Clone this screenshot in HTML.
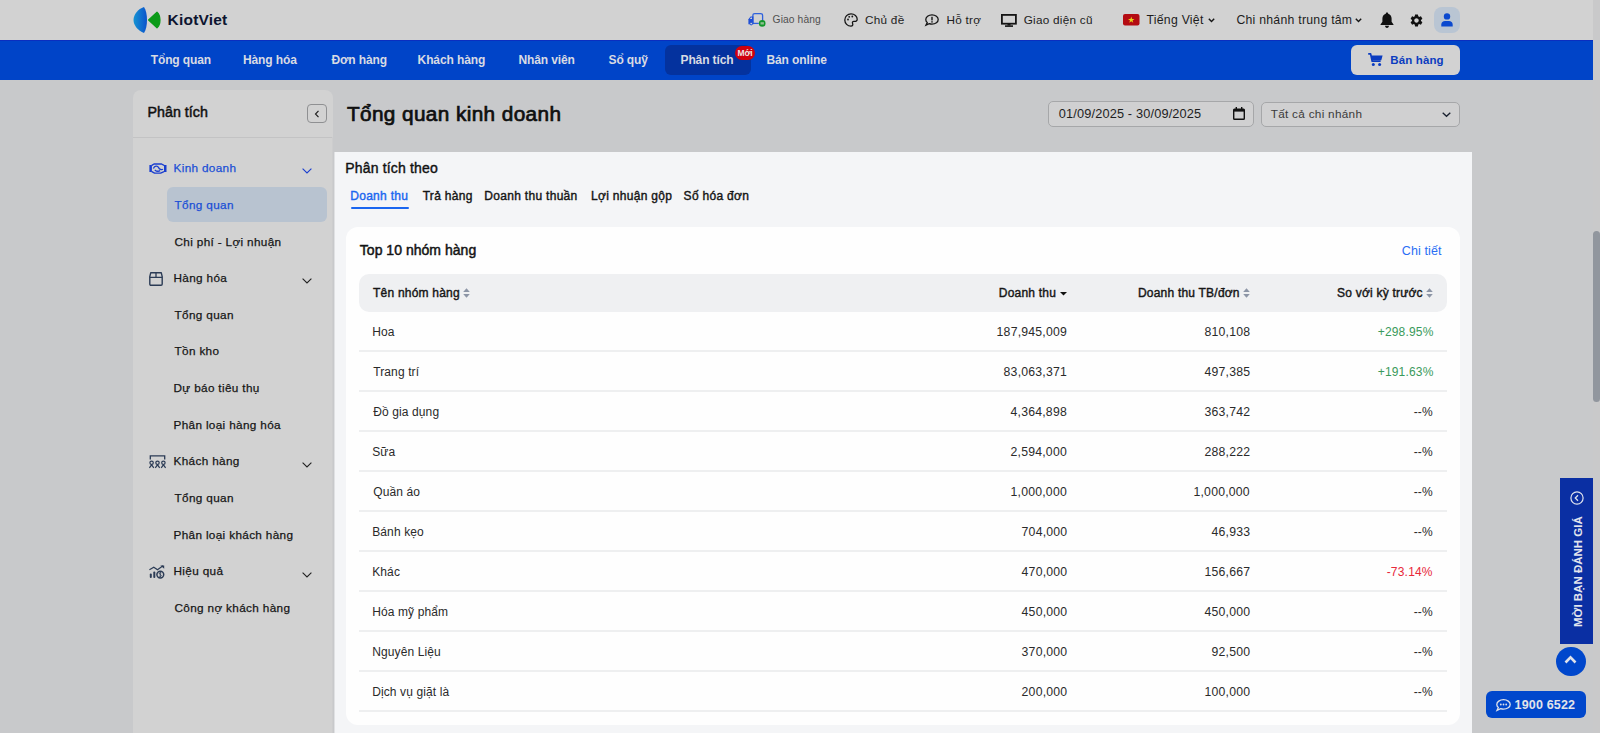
<!DOCTYPE html>
<html><head><meta charset="utf-8">
<style>
*{margin:0;padding:0;box-sizing:border-box}
html,body{width:1600px;height:733px;overflow:hidden}
body{background:#c8c9cb;font-family:"Liberation Sans",sans-serif;position:relative;color:#111}
.a{position:absolute}
.t{position:absolute;white-space:nowrap;line-height:20px;font-family:"Liberation Sans",sans-serif}
svg{position:absolute;overflow:visible}
</style></head><body>
<!-- bars -->
<div class="a" style="left:0;top:0;width:1593px;height:40px;background:#d2d2d2"></div>
<div class="a" style="left:0;top:40px;width:1593px;height:40px;background:#0044c8"></div>
<div class="a" style="left:1593px;top:0;width:7px;height:733px;background:#c9c9ca"></div>
<div class="a" style="left:1593px;top:231px;width:7px;height:171px;background:#91969e;border-radius:3.5px"></div>

<!-- logo -->
<svg style="left:133px;top:6px" width="28" height="28" viewBox="0 0 28 28">
 <defs><linearGradient id="lg" x1="0" y1="0" x2="1" y2="0"><stop offset="0" stop-color="#1593d2"/><stop offset="1" stop-color="#0a52cc"/></linearGradient></defs>
 <path d="M11 1 C5 3 0.5 8.5 0.5 14 C0.5 19.5 5 24.5 11 27 C13 24 14 19 14 14 C14 9 13 4 11 1Z" fill="url(#lg)"/>
 <path d="M15.6 14 L24 6.2 C26 8 27 11 27 14 C27 17 26 20 24 21.8 Z" fill="#0b9a18" stroke="#0b9a18" stroke-width="1.2" stroke-linejoin="round"/>
</svg>

<!-- top icons -->
<svg style="left:748px;top:13px" width="18" height="14" viewBox="0 0 18 14">
 <path d="M4.9 10.4 L4.9 2.4 Q4.9 0.6 6.9 0.6 L12.6 0.6 Q14.6 0.6 14.6 2.4 L14.6 8" fill="none" stroke="#2f62dc" stroke-width="1.3"/>
 <path d="M4.9 10.4 L10.8 10.4" stroke="#2f62dc" stroke-width="1.3"/>
 <path d="M0.4 11.2 L0.4 6.2 L2.6 3.4 L5.4 3.4 L5.4 11.2 Z" fill="#1f4fd6"/>
 <path d="M1.9 6 L2.9 4.6 L4 4.6 L4 6 Z" fill="#d2d2d2"/>
 <circle cx="3.2" cy="10.6" r="1.3" fill="#d2d2d2" stroke="#1f4fd6" stroke-width="1"/>
 <circle cx="14.2" cy="10.4" r="3.3" fill="#12962a"/>
 <rect x="12.5" y="9.2" width="3.4" height="2.3" fill="#8fbf92"/>
</svg>
<svg style="left:844px;top:13px" width="14" height="14" viewBox="0 0 14 14">
 <path d="M7 0.8 C10.6 0.8 13.2 3.3 13.2 6.2 C13.2 8.3 11.5 8.6 10.2 8.4 C8.8 8.2 8 9.3 8.6 10.6 C9.2 12 8.5 13.2 7 13.2 C3.5 13.2 0.8 10.4 0.8 7 C0.8 3.6 3.5 0.8 7 0.8Z" fill="none" stroke="#151515" stroke-width="1.3"/>
 <circle cx="4" cy="6.5" r="0.9" fill="#151515"/><circle cx="5.2" cy="3.8" r="0.9" fill="#151515"/><circle cx="8.3" cy="3.5" r="0.9" fill="#151515"/>
</svg>
<svg style="left:925px;top:14px" width="14" height="12" viewBox="0 0 14 12">
 <path d="M7 0.8 C10.5 0.8 13.2 2.9 13.2 5.5 C13.2 8.1 10.5 10.1 7 10.1 C6 10.1 5 9.9 4.2 9.6 L1 11.2 L2.2 8.6 C1.3 7.8 0.8 6.7 0.8 5.5 C0.8 2.9 3.5 0.8 7 0.8Z" fill="none" stroke="#151515" stroke-width="1.3"/>
 <rect x="6.3" y="2.8" width="1.4" height="3.6" fill="#151515"/><rect x="6.3" y="7.2" width="1.4" height="1.4" fill="#151515"/>
</svg>
<svg style="left:1001px;top:13.5px" width="16" height="13" viewBox="0 0 16 13">
 <rect x="0.9" y="0.9" width="14" height="8.8" fill="none" stroke="#151515" stroke-width="1.8"/>
 <rect x="6.5" y="9.5" width="3" height="2" fill="#151515"/><rect x="4" y="11.3" width="8" height="1.6" fill="#151515"/>
</svg>
<svg style="left:1122.5px;top:14px" width="17" height="12" viewBox="0 0 17 12">
 <rect x="0" y="0" width="16.5" height="11.4" rx="2" fill="#b40b12"/>
 <path d="M8.25 2.6 L9.05 4.95 L11.5 4.95 L9.5 6.4 L10.25 8.8 L8.25 7.3 L6.25 8.8 L7 6.4 L5 4.95 L7.45 4.95Z" fill="#e6d21a"/>
</svg>
<svg style="left:1207.5px;top:17.5px" width="7" height="5" viewBox="0 0 7 5"><path d="M0.8 0.8 L3.5 3.6 L6.2 0.8" fill="none" stroke="#151515" stroke-width="1.4"/></svg>
<svg style="left:1354.5px;top:18px" width="7" height="5" viewBox="0 0 7 5"><path d="M0.8 0.8 L3.5 3.6 L6.2 0.8" fill="none" stroke="#151515" stroke-width="1.4"/></svg>
<svg style="left:1380px;top:11.8px" width="14" height="16" viewBox="0 0 14 16">
 <path d="M7 0.5 C7.8 0.5 8.2 1 8.2 1.7 C10.4 2.3 11.6 4.3 11.6 6.6 L11.6 9.8 L13.5 12.4 L13.5 13 L0.5 13 L0.5 12.4 L2.4 9.8 L2.4 6.6 C2.4 4.3 3.6 2.3 5.8 1.7 C5.8 1 6.2 0.5 7 0.5Z" fill="#111"/>
 <path d="M5 13.8 L9 13.8 C9 15 8.1 16 7 16 C5.9 16 5 15 5 13.8Z" fill="#111"/>
</svg>
<svg style="left:1410.4px;top:13.6px" width="13" height="13" viewBox="0 0 24 24">
 <path d="M19.14 12.94c.04-.3.06-.61.06-.94 0-.32-.02-.64-.07-.94l2.03-1.58a.49.49 0 0 0 .12-.61l-1.92-3.32a.488.488 0 0 0-.59-.22l-2.39.96c-.5-.38-1.03-.7-1.62-.94l-.36-2.54a.484.484 0 0 0-.48-.41h-3.84c-.24 0-.43.17-.47.41l-.36 2.54c-.59.24-1.13.57-1.62.94l-2.39-.96c-.22-.08-.47 0-.59.22L2.74 8.87c-.12.21-.08.47.12.61l2.03 1.58c-.05.3-.09.63-.09.94s.02.64.07.94l-2.03 1.58a.49.49 0 0 0-.12.61l1.92 3.32c.12.22.37.29.59.22l2.39-.96c.5.38 1.03.7 1.62.94l.36 2.54c.05.24.24.41.48.41h3.84c.24 0 .44-.17.47-.41l.36-2.54c.59-.24 1.13-.56 1.62-.94l2.39.96c.22.08.47 0 .59-.22l1.92-3.32c.12-.22.07-.47-.12-.61l-2.01-1.58zM12 15.6c-1.98 0-3.6-1.62-3.6-3.6s1.62-3.6 3.6-3.6 3.6 1.62 3.6 3.6-1.62 3.6-3.6 3.6z" fill="#111" transform="translate(12 12) scale(1.15) translate(-12 -12)"/>
</svg>
<div class="a" style="left:1434px;top:7px;width:26px;height:26px;background:#b9c5d3;border-radius:8px"></div>
<svg style="left:1441px;top:13px" width="12" height="14" viewBox="0 0 12 14">
 <circle cx="6" cy="3.4" r="3.2" fill="#0b49cf"/>
 <path d="M0.3 13.4 L0.3 11.6 C0.3 9.3 2 8 4 8 L8 8 C10 8 11.7 9.3 11.7 11.6 L11.7 13.4 Z" fill="#0b49cf"/>
</svg>

<!-- nav extras -->
<div class="a" style="left:0;top:40px;width:1593px;height:1px;background:#0a2ec0"></div>
<div class="a" style="left:665.4px;top:45px;width:85.6px;height:30px;background:#04329e;border-radius:6px"></div>
<div class="a" style="left:735px;top:46.3px;width:20px;height:13.5px;background:#d0000e;border-radius:7px"></div>
<div class="t" style="left:737.6px;top:43px;font-size:8.5px;font-weight:bold;color:#ece4e4;letter-spacing:-0.2px">Mới</div>
<div class="a" style="left:1351px;top:45px;width:109px;height:30px;background:#d2d2d2;border-radius:6px"></div>
<svg style="left:1367.8px;top:53.3px" width="15" height="13" viewBox="0 0 15 13">
 <path d="M0.2 0.9 L2.6 0.9 L4.2 8.2 L12.6 8.2" fill="none" stroke="#0b3cc0" stroke-width="1.7" stroke-linejoin="round"/>
 <path d="M3.2 2.6 L14.6 2.6 L13.3 7.2 L4.2 7.2 Z" fill="#0b3cc0"/>
 <circle cx="5.3" cy="11.4" r="1.5" fill="#0b3cc0"/><circle cx="11.6" cy="11.4" r="1.5" fill="#0b3cc0"/>
</svg>

<!-- sidebar -->
<div class="a" style="left:133px;top:90px;width:200px;height:660px;background:#d2d2d2;border-radius:8px 8px 0 0"></div>
<div class="a" style="left:133px;top:136.5px;width:200px;height:1px;background:#c3c3c4"></div>
<div class="a" style="left:306.8px;top:103.5px;width:20px;height:19.5px;border:1px solid #8f9092;border-radius:4px"></div>
<svg style="left:313.5px;top:109.5px" width="6" height="8" viewBox="0 0 6 8"><path d="M4.5 0.8 L1.5 4 L4.5 7.2" fill="none" stroke="#222" stroke-width="1.2"/></svg>
<div class="a" style="left:167px;top:187.4px;width:160px;height:34.7px;background:#b8c3d0;border-radius:6px"></div>
<!-- sidebar icons -->
<svg style="left:148.5px;top:162.5px" width="18" height="11" viewBox="0 0 18 11">
 <rect x="0.4" y="2" width="2.5" height="7" fill="#1a3ecf"/>
 <rect x="15" y="2" width="2.5" height="7" fill="#1a3ecf"/>
 <path d="M2.8 2.4 L5 1 L12.6 1 L15 2.4 M2.8 8.6 L5.6 10.1 L11.6 10.1 L15 8.6" fill="none" stroke="#1a3ecf" stroke-width="1.4" stroke-linejoin="round"/>
 <path d="M4.4 5.6 C5.6 2.6 8.6 2.6 9.6 4.6 C10.6 6.6 12.6 7 14 6.2 M5.8 6.9 C7.4 8.3 9.6 8.5 11.2 7.6" fill="none" stroke="#1a3ecf" stroke-width="1.3"/>
</svg>
<svg style="left:149px;top:271.6px" width="14" height="14" viewBox="0 0 14 14">
 <path d="M1.7 0.8 L12.3 0.8 L13.2 4.6 L13.2 12 Q13.2 13.2 12 13.2 L2 13.2 Q0.8 13.2 0.8 12 L0.8 4.6 Z" fill="none" stroke="#2b3b55" stroke-width="1.4" stroke-linejoin="round"/>
 <path d="M0.8 5.4 L13.2 5.4 M7 0.8 L7 5.4" stroke="#2b3b55" stroke-width="1.3"/>
</svg>
<svg style="left:149px;top:455px" width="17" height="13" viewBox="0 0 17 13">
 <path d="M1.3 4.6 L1.3 0.8 L15.7 0.8 L15.7 4.6" fill="none" stroke="#2b3b55" stroke-width="1.3"/>
 <circle cx="2.6" cy="7.8" r="1.7" fill="none" stroke="#2b3b55" stroke-width="1.2"/>
 <circle cx="8.5" cy="7.8" r="1.7" fill="none" stroke="#2b3b55" stroke-width="1.2"/>
 <circle cx="14.4" cy="7.8" r="1.7" fill="none" stroke="#2b3b55" stroke-width="1.2"/>
 <path d="M0.4 12.8 L2.6 9.8 L4.8 12.8 M6.3 12.8 L8.5 9.8 L10.7 12.8 M12.2 12.8 L14.4 9.8 L16.6 12.8" fill="none" stroke="#2b3b55" stroke-width="1.2"/>
</svg>
<svg style="left:149px;top:564.8px" width="16" height="14" viewBox="0 0 16 14">
 <path d="M0.4 4.8 L4.8 2.2 L8.5 4.8 L14 0.8" fill="none" stroke="#2b3b55" stroke-width="1.2"/>
 <path d="M11.3 0.4 L15.2 0.4 L15.2 3.8 Z" fill="#2b3b55"/>
 <rect x="0.8" y="8.6" width="2" height="4.4" rx="0.9" fill="#2b3b55"/>
 <rect x="4.3" y="6.6" width="2" height="6.4" rx="0.9" fill="#2b3b55"/>
 <circle cx="11.3" cy="9.6" r="3.4" fill="none" stroke="#2b3b55" stroke-width="1.5"/>
 <path d="M12.2 8 C11.6 7.4 10.2 7.6 10.3 8.6 C10.4 9.6 12.3 9.4 12.3 10.6 C12.3 11.6 10.8 11.8 10.2 11.1 M11.3 6.9 L11.3 12.3" fill="none" stroke="#2b3b55" stroke-width="0.8"/>
</svg>
<!-- sidebar chevrons -->
<svg style="left:301.5px;top:168.3px" width="10" height="6" viewBox="0 0 10 6"><path d="M0.6 0.6 L5 5 L9.4 0.6" fill="none" stroke="#1a3ecf" stroke-width="1.1"/></svg>
<svg style="left:301.5px;top:278.3px" width="10" height="6" viewBox="0 0 10 6"><path d="M0.6 0.6 L5 5 L9.4 0.6" fill="none" stroke="#222" stroke-width="1.1"/></svg>
<svg style="left:301.5px;top:461.6px" width="10" height="6" viewBox="0 0 10 6"><path d="M0.6 0.6 L5 5 L9.4 0.6" fill="none" stroke="#222" stroke-width="1.1"/></svg>
<svg style="left:301.5px;top:571.6px" width="10" height="6" viewBox="0 0 10 6"><path d="M0.6 0.6 L5 5 L9.4 0.6" fill="none" stroke="#222" stroke-width="1.1"/></svg>

<!-- content header -->
<div class="a" style="left:1047.5px;top:101.4px;width:206.3px;height:25.8px;background:#d0d0d1;border:1px solid #a6a7a9;border-radius:5px"></div>
<svg style="left:1232.8px;top:106.9px" width="12" height="13" viewBox="0 0 12 13">
 <rect x="0.7" y="2.2" width="10.6" height="10" rx="0.8" fill="none" stroke="#111" stroke-width="1.4"/>
 <rect x="0.7" y="2.2" width="10.6" height="2.4" fill="#111"/>
 <rect x="2.6" y="0" width="1.4" height="3" fill="#111"/><rect x="8" y="0" width="1.4" height="3" fill="#111"/>
</svg>
<div class="a" style="left:1261.2px;top:101.6px;width:199.3px;height:25.1px;background:#d0d0d1;border:1px solid #a6a7a9;border-radius:5px"></div>
<svg style="left:1441.7px;top:112px" width="9" height="5" viewBox="0 0 9 5"><path d="M0.7 0.7 L4.5 4.3 L8.3 0.7" fill="none" stroke="#1a2130" stroke-width="1.3"/></svg>

<!-- spotlight panel -->
<div class="a" style="left:335px;top:152px;width:1137px;height:600px;background:#f4f5f7"></div>
<div class="a" style="left:334px;top:152px;width:1px;height:600px;background:#e0e1e3"></div>
<div class="a" style="left:332px;top:137px;width:1px;height:600px;background:#cdcdce"></div>
<div class="a" style="left:351px;top:207px;width:58px;height:2px;background:#1a66f0;border-radius:1px"></div>
<div class="a" style="left:346px;top:227px;width:1114px;height:498px;background:#fefefe;border-radius:12px"></div>
<div class="a" style="left:359px;top:274px;width:1087.5px;height:37.5px;background:#eff0f2;border-radius:10px"></div>
<!-- sort icons -->
<svg style="left:462.7px;top:288px" width="7" height="10" viewBox="0 0 7 10"><path d="M3.5 0.3 L6.8 4 L0.2 4Z M3.5 9.7 L6.8 6 L0.2 6Z" fill="#8c95a6"/></svg>
<svg style="left:1059.7px;top:291.5px" width="7" height="4" viewBox="0 0 7 4"><path d="M0 0 L7 0 L3.5 3.6Z" fill="#111"/></svg>
<svg style="left:1243px;top:288px" width="7" height="10" viewBox="0 0 7 10"><path d="M3.5 0.3 L6.8 4 L0.2 4Z M3.5 9.7 L6.8 6 L0.2 6Z" fill="#8c95a6"/></svg>
<svg style="left:1426.4px;top:288px" width="7" height="10" viewBox="0 0 7 10"><path d="M3.5 0.3 L6.8 4 L0.2 4Z M3.5 9.7 L6.8 6 L0.2 6Z" fill="#8c95a6"/></svg>
<div class="a" style="left:359px;top:350px;width:1087.5px;height:2px;background:#eeeff0"></div>
<div class="a" style="left:359px;top:390px;width:1087.5px;height:2px;background:#eeeff0"></div>
<div class="a" style="left:359px;top:430px;width:1087.5px;height:2px;background:#eeeff0"></div>
<div class="a" style="left:359px;top:470px;width:1087.5px;height:2px;background:#eeeff0"></div>
<div class="a" style="left:359px;top:510px;width:1087.5px;height:2px;background:#eeeff0"></div>
<div class="a" style="left:359px;top:550px;width:1087.5px;height:2px;background:#eeeff0"></div>
<div class="a" style="left:359px;top:590px;width:1087.5px;height:2px;background:#eeeff0"></div>
<div class="a" style="left:359px;top:630px;width:1087.5px;height:2px;background:#eeeff0"></div>
<div class="a" style="left:359px;top:670px;width:1087.5px;height:2px;background:#eeeff0"></div>
<div class="a" style="left:359px;top:710px;width:1087.5px;height:2px;background:#eeeff0"></div>

<!-- widgets -->
<div class="a" style="left:1560px;top:478px;width:33px;height:166px;background:#0a2fa3"></div>
<svg style="left:1570px;top:491px" width="14" height="14" viewBox="0 0 14 14"><circle cx="7" cy="7" r="6.1" fill="none" stroke="#dfe3ee" stroke-width="1.2"/><path d="M8 4.3 L5.3 7 L8 9.7" fill="none" stroke="#dfe3ee" stroke-width="1.3"/></svg>
<div class="t" id="vt" style="left:1568px;top:627px;font-size:11.5px;font-weight:bold;color:#e2e5ee;transform:rotate(-90deg);transform-origin:0 0">MỜI BẠN ĐÁNH GIÁ</div>
<div class="a" style="left:1556px;top:646.6px;width:29.7px;height:29.4px;background:#0047cc;border-radius:50%"></div>
<svg style="left:1564.4px;top:655px" width="13" height="9" viewBox="0 0 13 9"><path d="M1.5 7.5 L6.5 2.3 L11.5 7.5" fill="none" stroke="#dfe2ea" stroke-width="2.6"/></svg>
<div class="a" style="left:1486px;top:691.4px;width:99.7px;height:26.4px;background:#0047cc;border-radius:6px"></div>
<svg style="left:1496.2px;top:698.6px" width="15" height="12" viewBox="0 0 15 12">
 <path d="M7.5 0.7 C11.2 0.7 14.2 2.9 14.2 5.5 C14.2 8.1 11.2 10.2 7.5 10.2 C6.5 10.2 5.5 10 4.6 9.7 L1 11.4 L2.3 8.5 C1.3 7.7 0.8 6.7 0.8 5.5 C0.8 2.9 3.8 0.7 7.5 0.7Z" fill="none" stroke="#dfe2ea" stroke-width="1.3"/>
 <circle cx="4.8" cy="5.5" r="0.9" fill="#dfe2ea"/><circle cx="7.5" cy="5.5" r="0.9" fill="#dfe2ea"/><circle cx="10.2" cy="5.5" r="0.9" fill="#dfe2ea"/>
</svg>

<div class="t" style="left:167.6px;top:10px;font-size:15.5px;letter-spacing:0.2px;color:#0d1530;font-weight:bold;">KiotViet</div>
<div class="t" style="left:772.6px;top:10px;font-size:10.25px;letter-spacing:0.1px;color:#505050;font-weight:normal;">Giao hàng</div>
<div class="t" style="left:865px;top:10px;font-size:11.75px;letter-spacing:0.26px;color:#1c1c1c;font-weight:normal;">Chủ đề</div>
<div class="t" style="left:946.4px;top:10px;font-size:11.75px;letter-spacing:0.26px;color:#1c1c1c;font-weight:normal;">Hỗ trợ</div>
<div class="t" style="left:1023.7px;top:10px;font-size:11.75px;letter-spacing:0.26px;color:#1c1c1c;font-weight:normal;">Giao diện cũ</div>
<div class="t" style="left:1146.5px;top:10px;font-size:12.25px;letter-spacing:0.26px;color:#1c1c1c;font-weight:normal;">Tiếng Việt</div>
<div class="t" style="left:1236.4px;top:10px;font-size:12.25px;letter-spacing:0.26px;color:#1c1c1c;font-weight:normal;">Chi nhánh trung tâm</div>
<div class="t" style="left:150.7px;top:50px;font-size:12.0px;letter-spacing:-0.111px;color:#d9dbe3;font-weight:bold;">Tổng quan</div>
<div class="t" style="left:243px;top:50px;font-size:12.0px;letter-spacing:-0.111px;color:#d9dbe3;font-weight:bold;">Hàng hóa</div>
<div class="t" style="left:331.4px;top:50px;font-size:12.0px;letter-spacing:-0.111px;color:#d9dbe3;font-weight:bold;">Đơn hàng</div>
<div class="t" style="left:417.6px;top:50px;font-size:12.0px;letter-spacing:-0.111px;color:#d9dbe3;font-weight:bold;">Khách hàng</div>
<div class="t" style="left:518.4px;top:50px;font-size:12.0px;letter-spacing:-0.111px;color:#d9dbe3;font-weight:bold;">Nhân viên</div>
<div class="t" style="left:608.5px;top:50px;font-size:12.0px;letter-spacing:-0.111px;color:#d9dbe3;font-weight:bold;">Sổ quỹ</div>
<div class="t" style="left:680.5px;top:50px;font-size:12.0px;letter-spacing:-0.111px;color:#d9dbe3;font-weight:bold;">Phân tích</div>
<div class="t" style="left:766.5px;top:50px;font-size:12.0px;letter-spacing:-0.111px;color:#d9dbe3;font-weight:bold;">Bán online</div>
<div class="t" style="left:1390.3px;top:50px;font-size:11.5px;letter-spacing:0.129px;color:#0b3cc0;font-weight:bold;">Bán hàng</div>
<div class="t" style="left:147.5px;top:102px;font-size:14.25px;letter-spacing:0.012px;color:#111;font-weight:normal;-webkit-text-stroke:0.48px #111;">Phân tích</div>
<div class="t" style="left:173.5px;top:158px;font-size:11.75px;letter-spacing:0.341px;color:#1b4fd6;font-weight:normal;-webkit-text-stroke:0.25px #1b4fd6;">Kinh doanh</div>
<div class="t" style="left:174.5px;top:195px;font-size:11.75px;letter-spacing:0.341px;color:#1b4fd6;font-weight:normal;-webkit-text-stroke:0.25px #1b4fd6;">Tổng quan</div>
<div class="t" style="left:174.5px;top:232px;font-size:11.75px;letter-spacing:0.341px;color:#161616;font-weight:normal;-webkit-text-stroke:0.25px #161616;">Chi phí - Lợi nhuận</div>
<div class="t" style="left:173.5px;top:268px;font-size:11.75px;letter-spacing:0.341px;color:#161616;font-weight:normal;-webkit-text-stroke:0.25px #161616;">Hàng hóa</div>
<div class="t" style="left:174.5px;top:305px;font-size:11.75px;letter-spacing:0.341px;color:#161616;font-weight:normal;-webkit-text-stroke:0.25px #161616;">Tổng quan</div>
<div class="t" style="left:174.5px;top:341px;font-size:11.75px;letter-spacing:0.341px;color:#161616;font-weight:normal;-webkit-text-stroke:0.25px #161616;">Tồn kho</div>
<div class="t" style="left:173.5px;top:378px;font-size:11.75px;letter-spacing:0.341px;color:#161616;font-weight:normal;-webkit-text-stroke:0.25px #161616;">Dự báo tiêu thụ</div>
<div class="t" style="left:173.5px;top:415px;font-size:11.75px;letter-spacing:0.341px;color:#161616;font-weight:normal;-webkit-text-stroke:0.25px #161616;">Phân loại hàng hóa</div>
<div class="t" style="left:173.5px;top:451px;font-size:11.75px;letter-spacing:0.341px;color:#161616;font-weight:normal;-webkit-text-stroke:0.25px #161616;">Khách hàng</div>
<div class="t" style="left:174.5px;top:488px;font-size:11.75px;letter-spacing:0.341px;color:#161616;font-weight:normal;-webkit-text-stroke:0.25px #161616;">Tổng quan</div>
<div class="t" style="left:173.5px;top:525px;font-size:11.75px;letter-spacing:0.341px;color:#161616;font-weight:normal;-webkit-text-stroke:0.25px #161616;">Phân loại khách hàng</div>
<div class="t" style="left:173.5px;top:561px;font-size:11.75px;letter-spacing:0.341px;color:#161616;font-weight:normal;-webkit-text-stroke:0.25px #161616;">Hiệu quả</div>
<div class="t" style="left:174.5px;top:598px;font-size:11.75px;letter-spacing:0.341px;color:#161616;font-weight:normal;-webkit-text-stroke:0.25px #161616;">Công nợ khách hàng</div>
<div class="t" style="left:346.9px;top:104px;font-size:20.75px;letter-spacing:0.4px;color:#0f0f0f;font-weight:normal;-webkit-text-stroke:0.71px #0f0f0f;">Tổng quan kinh doanh</div>
<div class="t" style="left:1058.8px;top:104px;font-size:12.75px;letter-spacing:0.155px;color:#1e1e1e;font-weight:normal;">01/09/2025 - 30/09/2025</div>
<div class="t" style="left:1270.7px;top:104px;font-size:11.75px;letter-spacing:0.293px;color:#3a3a3a;font-weight:normal;">Tất cả chi nhánh</div>
<div class="t" style="left:345.3px;top:158px;font-size:14.0px;letter-spacing:0.169px;color:#111;font-weight:normal;-webkit-text-stroke:0.4px #111;">Phân tích theo</div>
<div class="t" style="left:350.2px;top:186px;font-size:12.0px;letter-spacing:0.302px;color:#1a66f0;font-weight:normal;-webkit-text-stroke:0.4px #1a66f0;">Doanh thu</div>
<div class="t" style="left:422.7px;top:186px;font-size:12.0px;letter-spacing:0.302px;color:#151515;font-weight:normal;-webkit-text-stroke:0.4px #151515;">Trả hàng</div>
<div class="t" style="left:484.3px;top:186px;font-size:12.0px;letter-spacing:0.302px;color:#151515;font-weight:normal;-webkit-text-stroke:0.4px #151515;">Doanh thu thuần</div>
<div class="t" style="left:591px;top:186px;font-size:12.0px;letter-spacing:0.302px;color:#151515;font-weight:normal;-webkit-text-stroke:0.4px #151515;">Lợi nhuận gộp</div>
<div class="t" style="left:683.6px;top:186px;font-size:12.0px;letter-spacing:0.302px;color:#151515;font-weight:normal;-webkit-text-stroke:0.4px #151515;">Số hóa đơn</div>
<div class="t" style="left:359.8px;top:240px;font-size:14.0px;letter-spacing:0.027px;color:#141414;font-weight:normal;-webkit-text-stroke:0.48px #141414;">Top 10 nhóm hàng</div>
<div class="t" style="left:1401.8px;top:241px;font-size:12.5px;letter-spacing:0.114px;color:#2a6ef5;font-weight:normal;">Chi tiết</div>
<div class="t" style="left:373px;top:283px;font-size:12.0px;letter-spacing:0.218px;color:#161616;font-weight:normal;-webkit-text-stroke:0.41px #161616;">Tên nhóm hàng</div>
<div class="t" style="left:998.8px;top:283px;font-size:12.0px;letter-spacing:0.218px;color:#161616;font-weight:normal;-webkit-text-stroke:0.41px #161616;">Doanh thu</div>
<div class="t" style="left:1137.9px;top:283px;font-size:12.0px;letter-spacing:0.218px;color:#161616;font-weight:normal;-webkit-text-stroke:0.41px #161616;">Doanh thu TB/đơn</div>
<div class="t" style="left:1337.1px;top:283px;font-size:12.0px;letter-spacing:0.218px;color:#161616;font-weight:normal;-webkit-text-stroke:0.41px #161616;">So với kỳ trước</div>
<div class="t" style="left:372.2px;top:322px;font-size:12.0px;letter-spacing:0.118px;color:#2a2a2a;font-weight:normal;">Hoa</div>
<div class="t" style="left:996.6px;top:322px;font-size:12.25px;letter-spacing:0.203px;color:#2a2a2a;font-weight:normal;">187,945,009</div>
<div class="t" style="left:1204.5px;top:322px;font-size:12.25px;letter-spacing:0.203px;color:#2a2a2a;font-weight:normal;">810,108</div>
<div class="t" style="left:1377.7px;top:322px;font-size:12.0px;letter-spacing:0.191px;color:#3a9a5c;font-weight:normal;">+298.95%</div>
<div class="t" style="left:373.2px;top:362px;font-size:12.0px;letter-spacing:0.118px;color:#2a2a2a;font-weight:normal;">Trang trí</div>
<div class="t" style="left:1003.6px;top:362px;font-size:12.25px;letter-spacing:0.203px;color:#2a2a2a;font-weight:normal;">83,063,371</div>
<div class="t" style="left:1204.5px;top:362px;font-size:12.25px;letter-spacing:0.203px;color:#2a2a2a;font-weight:normal;">497,385</div>
<div class="t" style="left:1377.7px;top:362px;font-size:12.0px;letter-spacing:0.191px;color:#3a9a5c;font-weight:normal;">+191.63%</div>
<div class="t" style="left:373.2px;top:402px;font-size:12.0px;letter-spacing:0.118px;color:#2a2a2a;font-weight:normal;">Đồ gia dụng</div>
<div class="t" style="left:1010.6px;top:402px;font-size:12.25px;letter-spacing:0.203px;color:#2a2a2a;font-weight:normal;">4,364,898</div>
<div class="t" style="left:1204.5px;top:402px;font-size:12.25px;letter-spacing:0.203px;color:#2a2a2a;font-weight:normal;">363,742</div>
<div class="t" style="left:1413.7px;top:402px;font-size:12.0px;letter-spacing:0.191px;color:#2a2a2a;font-weight:normal;">--%</div>
<div class="t" style="left:372.2px;top:442px;font-size:12.0px;letter-spacing:0.118px;color:#2a2a2a;font-weight:normal;">Sữa</div>
<div class="t" style="left:1010.6px;top:442px;font-size:12.25px;letter-spacing:0.203px;color:#2a2a2a;font-weight:normal;">2,594,000</div>
<div class="t" style="left:1204.5px;top:442px;font-size:12.25px;letter-spacing:0.203px;color:#2a2a2a;font-weight:normal;">288,222</div>
<div class="t" style="left:1413.7px;top:442px;font-size:12.0px;letter-spacing:0.191px;color:#2a2a2a;font-weight:normal;">--%</div>
<div class="t" style="left:373.2px;top:482px;font-size:12.0px;letter-spacing:0.118px;color:#2a2a2a;font-weight:normal;">Quần áo</div>
<div class="t" style="left:1010.6px;top:482px;font-size:12.25px;letter-spacing:0.203px;color:#2a2a2a;font-weight:normal;">1,000,000</div>
<div class="t" style="left:1193.5px;top:482px;font-size:12.25px;letter-spacing:0.203px;color:#2a2a2a;font-weight:normal;">1,000,000</div>
<div class="t" style="left:1413.7px;top:482px;font-size:12.0px;letter-spacing:0.191px;color:#2a2a2a;font-weight:normal;">--%</div>
<div class="t" style="left:372.2px;top:522px;font-size:12.0px;letter-spacing:0.118px;color:#2a2a2a;font-weight:normal;">Bánh kẹo</div>
<div class="t" style="left:1021.6px;top:522px;font-size:12.25px;letter-spacing:0.203px;color:#2a2a2a;font-weight:normal;">704,000</div>
<div class="t" style="left:1211.5px;top:522px;font-size:12.25px;letter-spacing:0.203px;color:#2a2a2a;font-weight:normal;">46,933</div>
<div class="t" style="left:1413.7px;top:522px;font-size:12.0px;letter-spacing:0.191px;color:#2a2a2a;font-weight:normal;">--%</div>
<div class="t" style="left:372.2px;top:562px;font-size:12.0px;letter-spacing:0.118px;color:#2a2a2a;font-weight:normal;">Khác</div>
<div class="t" style="left:1021.6px;top:562px;font-size:12.25px;letter-spacing:0.203px;color:#2a2a2a;font-weight:normal;">470,000</div>
<div class="t" style="left:1204.5px;top:562px;font-size:12.25px;letter-spacing:0.203px;color:#2a2a2a;font-weight:normal;">156,667</div>
<div class="t" style="left:1386.7px;top:562px;font-size:12.0px;letter-spacing:0.191px;color:#e8283a;font-weight:normal;">-73.14%</div>
<div class="t" style="left:372.2px;top:602px;font-size:12.0px;letter-spacing:0.118px;color:#2a2a2a;font-weight:normal;">Hóa mỹ phẩm</div>
<div class="t" style="left:1021.6px;top:602px;font-size:12.25px;letter-spacing:0.203px;color:#2a2a2a;font-weight:normal;">450,000</div>
<div class="t" style="left:1204.5px;top:602px;font-size:12.25px;letter-spacing:0.203px;color:#2a2a2a;font-weight:normal;">450,000</div>
<div class="t" style="left:1413.7px;top:602px;font-size:12.0px;letter-spacing:0.191px;color:#2a2a2a;font-weight:normal;">--%</div>
<div class="t" style="left:372.2px;top:642px;font-size:12.0px;letter-spacing:0.118px;color:#2a2a2a;font-weight:normal;">Nguyên Liệu</div>
<div class="t" style="left:1021.6px;top:642px;font-size:12.25px;letter-spacing:0.203px;color:#2a2a2a;font-weight:normal;">370,000</div>
<div class="t" style="left:1211.5px;top:642px;font-size:12.25px;letter-spacing:0.203px;color:#2a2a2a;font-weight:normal;">92,500</div>
<div class="t" style="left:1413.7px;top:642px;font-size:12.0px;letter-spacing:0.191px;color:#2a2a2a;font-weight:normal;">--%</div>
<div class="t" style="left:372.2px;top:682px;font-size:12.0px;letter-spacing:0.118px;color:#2a2a2a;font-weight:normal;">Dịch vụ giặt là</div>
<div class="t" style="left:1021.6px;top:682px;font-size:12.25px;letter-spacing:0.203px;color:#2a2a2a;font-weight:normal;">200,000</div>
<div class="t" style="left:1204.5px;top:682px;font-size:12.25px;letter-spacing:0.203px;color:#2a2a2a;font-weight:normal;">100,000</div>
<div class="t" style="left:1413.7px;top:682px;font-size:12.0px;letter-spacing:0.191px;color:#2a2a2a;font-weight:normal;">--%</div>
<div class="t" style="left:1514.5px;top:695px;font-size:12.5px;letter-spacing:0.175px;color:#e2e4ea;font-weight:bold;">1900 6522</div>
</body></html>
